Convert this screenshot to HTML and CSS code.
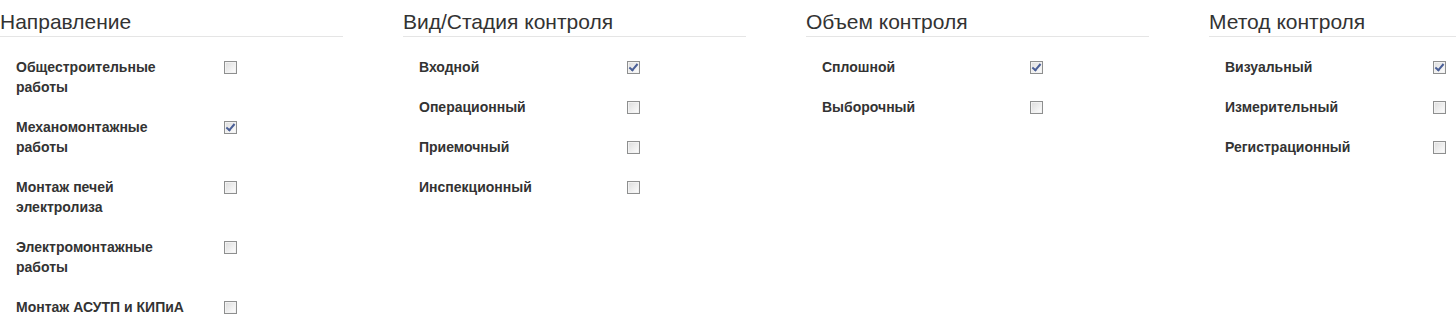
FILE: index.html
```html
<!doctype html>
<html>
<head>
<meta charset="utf-8">
<title>Фильтр контроля</title>
<link rel="stylesheet" href="styles.css">
</head>
<body>
<div class="filters">
    <div class="group">
        <h3 class="group-title">Направление</h3>
        <div class="item"><label>Общестроительные работы</label><span class="check"></span></div>
        <div class="item"><label>Механомонтажные работы</label><span class="check checked"></span></div>
        <div class="item"><label>Монтаж печей электролиза</label><span class="check"></span></div>
        <div class="item"><label>Электромонтажные работы</label><span class="check"></span></div>
        <div class="item"><label>Монтаж АСУТП и КИПиА</label><span class="check"></span></div>
    </div>
    <div class="group">
        <h3 class="group-title">Вид/Стадия контроля</h3>
        <div class="item"><label>Входной</label><span class="check checked"></span></div>
        <div class="item"><label>Операционный</label><span class="check"></span></div>
        <div class="item"><label>Приемочный</label><span class="check"></span></div>
        <div class="item"><label>Инспекционный</label><span class="check"></span></div>
    </div>
    <div class="group">
        <h3 class="group-title">Объем контроля</h3>
        <div class="item"><label>Сплошной</label><span class="check checked"></span></div>
        <div class="item"><label>Выборочный</label><span class="check"></span></div>
    </div>
    <div class="group">
        <h3 class="group-title">Метод контроля</h3>
        <div class="item"><label>Визуальный</label><span class="check checked"></span></div>
        <div class="item"><label>Измерительный</label><span class="check"></span></div>
        <div class="item"><label>Регистрационный</label><span class="check"></span></div>
    </div>
</div>
</body>
</html>
```

FILE: styles.css
```css
body {
    margin: 0;
    background: #fff;
    color: #333;
    font-family: "Liberation Sans", Arial, sans-serif;
}
.filters {
    display: grid;
    grid-template-columns: repeat(3, 343px) 247px;
    column-gap: 60px;
    overflow: hidden;
}
.group-title {
    margin: 0 0 20px;
    padding-top: 10px;
    height: 26px;
    font-size: 21px;
    font-weight: normal;
    line-height: 24px;
    white-space: nowrap;
    border-bottom: 1px solid #e5e5e5;
}
.item {
    display: flex;
    align-items: flex-start;
    padding-left: 16px;
}
.item + .item {
    margin-top: 20px;
}
.item label {
    width: 176px;
    margin-right: 32px;
    font-size: 14px;
    font-weight: bold;
    line-height: 20px;
}
.check {
    box-sizing: border-box;
    width: 13px;
    height: 13px;
    margin-top: 4px;
    border: 1px solid #8e8f8f;
    background: linear-gradient(135deg, #dcdcdc 0%, #f4f4f4 70%, #fff 100%);
    box-shadow: inset 0 0 0 1px #f2f2f2;
    position: relative;
}
.check.checked::after {
    content: "";
    position: absolute;
    left: 3px;
    top: 0;
    width: 3px;
    height: 7px;
    border: solid #4a5f97;
    border-width: 0 2px 2px 0;
    transform: rotate(40deg);
}
```
